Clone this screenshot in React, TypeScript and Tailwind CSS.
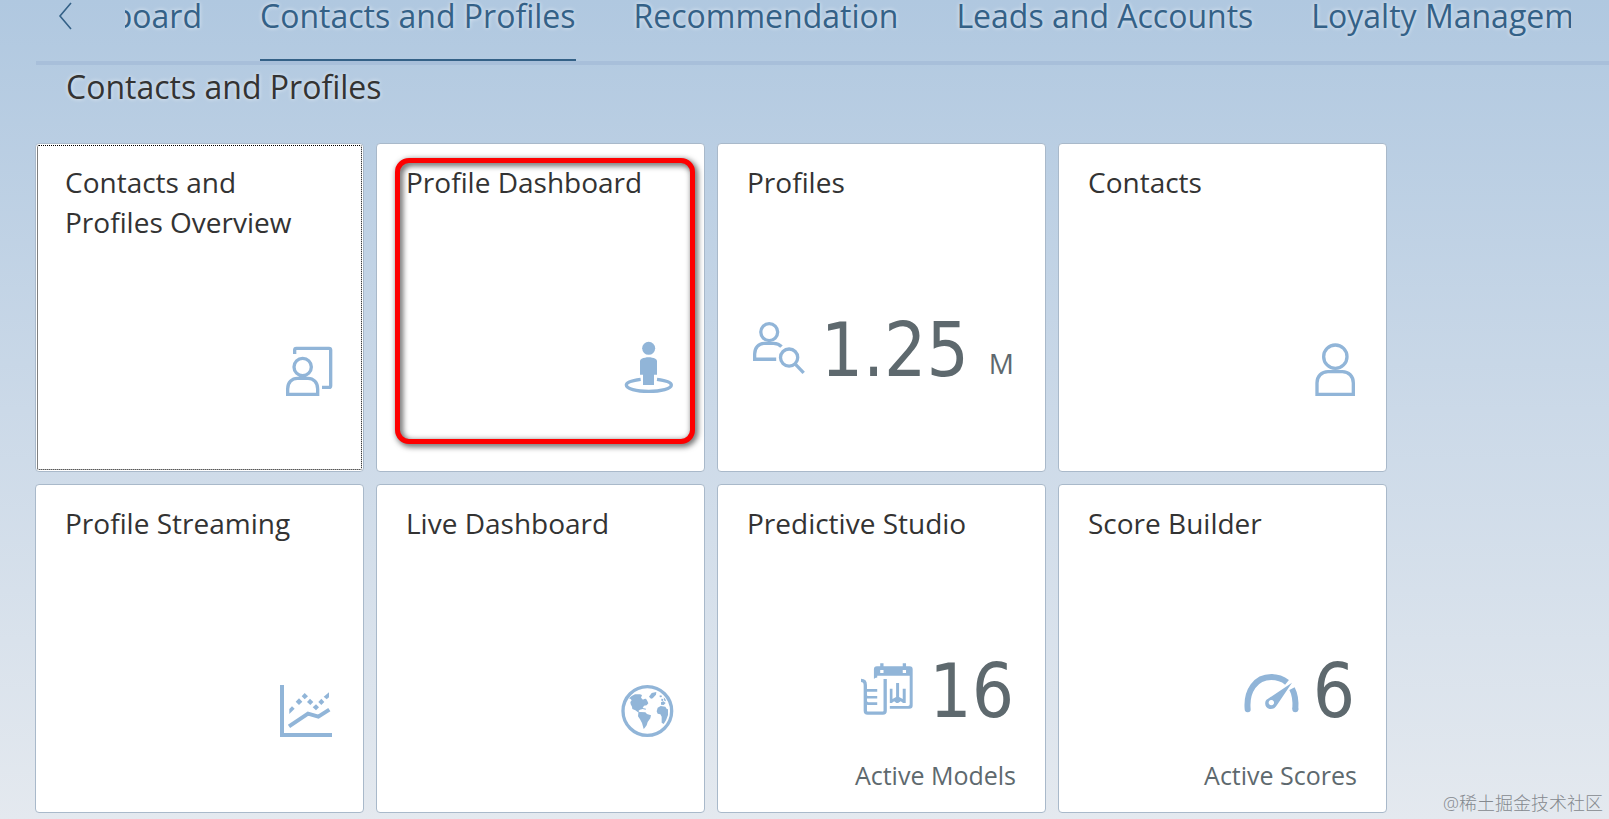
import React from 'react';
import { clsx } from 'clsx';

interface TileData {
  title: string;
  icon: React.ReactNode;
  value?: string;
  unit?: string;
  footer?: string;
  focused?: boolean;
  highlighted?: boolean;
}

interface IconProps {
  viewBox: string;
  children: React.ReactNode;
}

function Icon({ viewBox, children }: IconProps) {
  return (
    <svg
      viewBox={viewBox}
      aria-hidden="true"
      className="h-[52px] w-[52px] shrink-0 overflow-visible text-[#91b5d8]"
      fill="none"
      stroke="currentColor"
      strokeWidth="10"
    >
      {children}
    </svg>
  );
}

const OverviewIcon = (
  <Icon viewBox="33 42 156 156">
    <path d="M77 72V60q0-5 5-5h98q5 0 5 5v107q0 5-5 5h-21" />
    <circle cx="101" cy="111" r="26" />
    <path d="M56 193v-16c0-20 13-32 29-32h32c16 0 29 12 29 32v16z" />
  </Icon>
);

const PersonPlacedIcon = (
  <Icon viewBox="33 42 156 156">
    <g fill="currentColor" stroke="none">
      <circle cx="116" cy="55" r="19.5" />
      <path d="M90 134V93q0-5 5-7c13-6 29-6 41 0q5 2 5 7v41h-9v31h-33v-31z" />
    </g>
    <path d="M92 148c-25 3-43 9-43 17 0 11 30 19 67 19s68-8 68-19c0-8-18-14-43-17" />
  </Icon>
);

const PersonSearchIcon = (
  <Icon viewBox="35 51 157 156">
    <circle cx="84" cy="81" r="25.5" />
    <path d="M105 163H40v-16c0-19 12-32 29-32h28c10 0 18 3 24 10" />
    <circle cx="144" cy="158" r="26" />
    <path d="m162 177 26 27" />
  </Icon>
);

const PersonIcon = (
  <Icon viewBox="9 42 156 156">
    <circle cx="106" cy="80" r="35" />
    <path d="M51 193v-34c0-21 14-34 33-34h43c19 0 33 13 33 34v34z" />
  </Icon>
);

const LineChartIcon = (
  <Icon viewBox="33 42 156 156">
    <path strokeWidth="12" d="M39 42v150h150" />
    <path strokeWidth="12" d="m60 166 57-38 31 9 33-21" />
    <g fill="currentColor" stroke="none">
      <path d="m61 114 8-8 8 7-16 16z" />
      <path d="m90 82 10 10-10 10-10-10z" />
      <path d="m107 66 10 10-10 9-9-9z" />
      <path d="m123 83 10 10-9 9-10-9z" />
      <path d="m141 100 9 9-9 9-10-9z" />
      <path d="m157 83 9 10-9 9-9-9z" />
      <path d="m180 64v15l-7 6-9-8z" />
    </g>
  </Icon>
);

const GlobeIcon = (
  <Icon viewBox="33 42 156 156">
    <circle cx="112" cy="120" r="73" />
    <g fill="currentColor" stroke="none">
      <path d="m65 75 10-5h15l6 2-3 8 6 6 3-2 6-1 4 7 3 7-5 6-8 1-4 7 10 2-1 3-9-2-8 2-5 4 7 6-4 1-12-9-9-4-1-7-4-7-1-7 4-5-3-4-5-2z" />
      <path d="m85 126 6-3 15 1 5 5 12 4-2 9-8 11-3 10-6 8-3 3-5-18-6-11-6-9z" />
      <path d="m117 77 8-11 14-3-1 8-10 11-5 1z" />
      <path d="m143 110 9-5 14 2 5 8 3-1v18l-6 16-7 11-6-4v-18l-4-7-8-2-3-7z" />
      <path d="m148 74 6-1 2 5-6 1zM154 83l6 1-1 6-5-1zM153 94l7-3 7 5-6 6-8-1zM161 79l5 5 2 7-5-2z" />
    </g>
  </Icon>
);

const ModelIcon = (
  <Icon viewBox="38 39 157 156">
    <g fill="currentColor" stroke="none">
      <path
        fillRule="evenodd"
        d="M77 87V57q0-9 9-9h10V39h10v9h58v-9h10v9h11q9 0 9 9v110q0 10-10 10h-59v-9h55q5 0 5-5V77h-98v5q-8 0-10 5zM96 60v9h10v-9zM164 60v9h10v-9z"
      />
      <path d="M125 116h8v31l11-6V99h9v42l11 6v-31h9v43h-8l-7-5-8 5h-5l-7-5-7 5h-6z" />
    </g>
    <path d="M38 91q13 0 13 14v78q0 7 7 7h46q7 0 7-7V87" />
    <path strokeWidth="8" d="M51 121h36M51 138l6 4h30M51 156l8 5h28" />
  </Icon>
);

const GaugeIcon = (
  <Icon viewBox="165 39 156 156">
    <path strokeWidth="18" strokeLinecap="round" d="M173 178c-5-56 24-97 71-97" />
    <path strokeWidth="18" d="M243 81c20 0 36 6 48 16" />
    <path strokeWidth="18" d="M306 116c9 17 12 37 10 62" />
    <circle cx="316" cy="178" r="9" fill="currentColor" stroke="none" />
    <path
      fill="currentColor"
      fillRule="evenodd"
      stroke="none"
      d="m306 98-45 67c-5 10-14 13-22 12-10-2-15-11-13-21 1-4 3-7 7-9zM244 150a8 8 0 1 0 .1 0z"
    />
  </Icon>
);

const tabs = ['Recommendation', 'Leads and Accounts', 'Loyalty Management'];

const tiles: TileData[] = [
  { title: 'Contacts and Profiles Overview', icon: OverviewIcon, focused: true },
  { title: 'Profile Dashboard', icon: PersonPlacedIcon, highlighted: true },
  { title: 'Profiles', icon: PersonSearchIcon, value: '1.25', unit: 'M' },
  { title: 'Contacts', icon: PersonIcon },
  { title: 'Profile Streaming', icon: LineChartIcon },
  { title: 'Live Dashboard', icon: GlobeIcon },
  { title: 'Predictive Studio', icon: ModelIcon, value: '16', footer: 'Active Models' },
  { title: 'Score Builder', icon: GaugeIcon, value: '6', footer: 'Active Scores' },
];

function Tile({ tile }: { tile: TileData }) {
  const numeric = tile.value !== undefined;

  return (
    <a
      href="#"
      className={clsx(
        'relative flex h-[329px] w-[329px] flex-col rounded border border-[#a9b9ca] bg-white px-[29px] pt-[18px]',
        tile.focused && 'outline-1 -outline-offset-3 outline-dotted outline-black'
      )}
    >
      <h3 className="h-20 text-[28px] leading-10 text-[#333333]">{tile.title}</h3>

      <div className={clsx('flex items-end justify-end pr-0.5', numeric ? 'mt-20' : 'mt-[102px]')}>
        {tile.icon}
        {numeric && (
          <span className="ml-4 font-['DejaVu_Sans_Condensed','DejaVu_Sans',sans-serif] text-[74px] leading-[48px] text-[#5e696e]">
            {tile.value}
          </span>
        )}
        {tile.unit && <span className="ml-5 text-[28px] leading-[22px] text-[#5e696e]">{tile.unit}</span>}
      </div>

      {tile.footer && (
        <p className="mt-[42px] text-right text-[25px] leading-9 text-[#5e696e]">{tile.footer}</p>
      )}

      {/* Red marker frame */}
      {tile.highlighted && (
        <div className="pointer-events-none absolute top-[14px] right-[9px] bottom-[27px] left-[18px] rounded-[14px] border-[5px] border-[#fe0000] drop-shadow-[2px_2px_3px_rgba(0,0,0,0.8)]" />
      )}
    </a>
  );
}

export default function App() {
  return (
    <div className="relative min-h-screen overflow-hidden bg-linear-to-b from-[#b0c8e0] via-[#cbd9e8] to-[#e4e9ef] font-['Open_Sans','Noto_Sans_CJK_SC',sans-serif]">
      {/* Tab strip */}
      <nav className="ml-9 flex items-start border-b-4 border-[#a8bfda] text-[32px] leading-8 whitespace-nowrap text-[#346187] [text-shadow:0_0_4px_rgba(255,255,255,0.7)]">
        <button aria-label="Scroll left" className="mr-[52px] ml-[22px] pt-0.5">
          <svg viewBox="0 0 15 28" className="h-7 w-[15px]" fill="none" stroke="currentColor" strokeWidth="1.6">
            <path d="M13 1 2 14l11 13" />
          </svg>
        </button>
        <div className="mr-[38px] flex min-w-0 flex-1 gap-[58px] overflow-x-clip">
          <a href="#" className="flex w-[77px] shrink-0 justify-end pb-[29px]">
            board
          </a>
          <a href="#" className="shrink-0 border-b-2 border-[#346187] pb-[27px]">
            Contacts and Profiles
          </a>
          {tabs.map((tab) => (
            <a key={tab} href="#" className="shrink-0 pb-[29px]">
              {tab}
            </a>
          ))}
        </div>
      </nav>

      <main className="pb-1.5 pl-[35px]">
        <h2 className="mb-[34px] pl-[31px] text-[32px] leading-[44px] text-[#333333] [text-shadow:0_0_4px_rgba(255,255,255,0.7)]">
          Contacts and Profiles
        </h2>
        <div className="flex flex-wrap gap-3">
          {tiles.map((tile) => (
            <Tile key={tile.title} tile={tile} />
          ))}
        </div>
      </main>

      <span className="absolute right-[6px] bottom-1 text-[18px] leading-6 font-light text-[#85898e]">
        @稀土掘金技术社区
      </span>
    </div>
  );
}
